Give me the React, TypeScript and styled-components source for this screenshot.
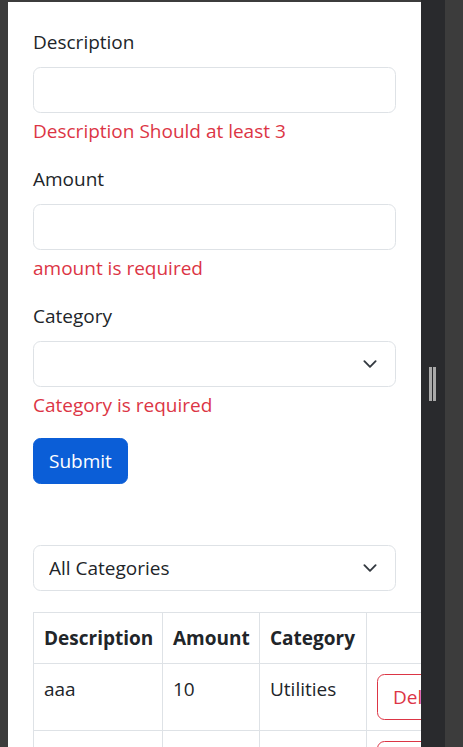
import styled, { createGlobalStyle } from 'styled-components';

const GlobalStyle = createGlobalStyle`
  html, body {
    margin: 0;
    padding: 0;
    height: 100%;
  }
  body {
    background: #3c3c3c;
    color: #212529;
    font-family: "Open Sans", "Noto Sans", sans-serif;
    font-size: 19px;
    line-height: 30px;
  }
  * {
    box-sizing: border-box;
  }
`;

const expenses = [
  { id: 1, description: 'aaa', amount: 10, category: 'Utilities' },
  { id: 2, description: 'bbb', amount: 20, category: 'Groceries' },
];

function Chevron() {
  return (
    <ChevronIcon viewBox="0 0 16 16" width="20" height="15" aria-hidden="true">
      <path
        fill="none"
        stroke="#343a40"
        strokeLinecap="round"
        strokeLinejoin="round"
        strokeWidth="2"
        d="m2 5 6 6 6-6"
      />
    </ChevronIcon>
  );
}

function Field({ label, error, children }) {
  return (
    <StyledField>
      <Label>{label}</Label>
      {children}
      <Feedback>{error}</Feedback>
    </StyledField>
  );
}

function App() {
  return (
    <>
      <GlobalStyle />
      <Frame>
        <Panel>
          <Form onSubmit={e => e.preventDefault()}>
            <Field label="Description" error="Description Should at least 3">
              <Input type="text" />
            </Field>
            <Field label="Amount" error="amount is required">
              <Input type="number" />
            </Field>
            <Field label="Category" error="Category is required">
              <SelectWrap>
                <Select defaultValue="">
                  <option value=""></option>
                  <option value="Groceries">Groceries</option>
                  <option value="Utilities">Utilities</option>
                  <option value="Entertainment">Entertainment</option>
                </Select>
                <Chevron />
              </SelectWrap>
            </Field>
            <SubmitButton type="submit">Submit</SubmitButton>
          </Form>

          <FilterWrap>
            <Select defaultValue="">
              <option value="">All Categories</option>
              <option value="Groceries">Groceries</option>
              <option value="Utilities">Utilities</option>
              <option value="Entertainment">Entertainment</option>
            </Select>
            <Chevron />
          </FilterWrap>

          <Table>
            <colgroup>
              <col style={{ width: 129 }} />
              <col style={{ width: 97 }} />
              <col style={{ width: 107 }} />
              <col style={{ width: 111 }} />
            </colgroup>
            <thead>
              <tr>
                <Th>Description</Th>
                <Th>Amount</Th>
                <Th>Category</Th>
                <Th></Th>
              </tr>
            </thead>
            <tbody>
              {expenses.map(expense => (
                <tr key={expense.id}>
                  <Td>{expense.description}</Td>
                  <Td>{expense.amount}</Td>
                  <Td>{expense.category}</Td>
                  <Td>
                    <DeleteButton>Delete</DeleteButton>
                  </Td>
                </tr>
              ))}
            </tbody>
          </Table>
        </Panel>
        <Splitter>
          <Grip />
        </Splitter>
        <Gutter />
      </Frame>
    </>
  );
}

export default App;

const Frame = styled.div`
  display: flex;
  height: 100vh;
  padding: 2px 0 0 8px;
  background: #3c3c3c;
  overflow: hidden;
`;

const Panel = styled.div`
  flex: none;
  width: 413px;
  padding: 25px;
  background: #fff;
  overflow: hidden;
`;

const Splitter = styled.div`
  flex: none;
  width: 24px;
  margin-top: -2px;
  padding-top: 367px;
  display: flex;
  justify-content: center;
  background: #292a2d;
`;

const Grip = styled.div`
  width: 7px;
  height: 34px;
  margin-left: -2px;
  border-left: 3px solid #a9a9a9;
  border-right: 3px solid #a9a9a9;
`;

const Gutter = styled.div`
  flex: 1;
  margin-top: -2px;
  background: #3c3c3c;
`;

const Form = styled.form`
  margin-bottom: 61px;
`;

const StyledField = styled.div`
  margin-bottom: 20px;
`;

const Label = styled.label`
  display: block;
  margin-bottom: 10px;
  line-height: 30px;
`;

const Input = styled.input`
  display: block;
  width: 100%;
  height: 46px;
  padding: 7px 15px;
  font: inherit;
  color: #212529;
  background: #fff;
  border: 1px solid #dee2e6;
  border-radius: 7.5px;
  appearance: none;
  -moz-appearance: textfield;

  &::-webkit-outer-spin-button,
  &::-webkit-inner-spin-button {
    -webkit-appearance: none;
    margin: 0;
  }
`;

const Feedback = styled.div`
  margin-top: 5px;
  line-height: 26px;
  color: #dc3545;
`;

const SelectWrap = styled.div`
  position: relative;
`;

const FilterWrap = styled(SelectWrap)`
  margin-bottom: 21px;
`;

const Select = styled.select`
  display: block;
  width: 100%;
  height: 46px;
  padding: 7px 45px 7px 15px;
  font: inherit;
  color: #212529;
  background: #fff;
  border: 1px solid #dee2e6;
  border-radius: 7.5px;
  appearance: none;
`;

const ChevronIcon = styled.svg`
  position: absolute;
  right: 16px;
  top: 50%;
  transform: translateY(-50%);
  pointer-events: none;
`;

const SubmitButton = styled.button`
  display: inline-block;
  height: 46px;
  padding: 7px 15px;
  font: inherit;
  line-height: 30px;
  color: #fff;
  background: #0b5ed7;
  border: 1px solid #0b5ed7;
  border-radius: 7.5px;
`;

const Table = styled.table`
  width: 444px;
  table-layout: fixed;
  border-collapse: collapse;
  vertical-align: top;
`;

const Th = styled.th`
  padding: 10px;
  line-height: 30px;
  text-align: left;
  font-weight: 700;
  border: 1px solid #dee2e6;
  white-space: nowrap;
`;

const Td = styled.td`
  padding: 10px;
  line-height: 30px;
  vertical-align: top;
  border: 1px solid #dee2e6;
  white-space: nowrap;
`;

const DeleteButton = styled.button`
  display: inline-block;
  height: 46px;
  padding: 7px 15px;
  font: inherit;
  line-height: 30px;
  color: #dc3545;
  background: transparent;
  border: 1px solid #dc3545;
  border-radius: 7.5px;
`;
